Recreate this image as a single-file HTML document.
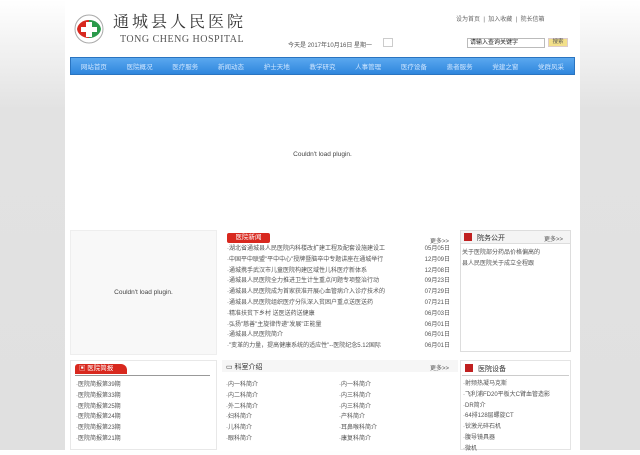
<!DOCTYPE html>
<html><head><meta charset="utf-8"><style>
*{margin:0;padding:0;box-sizing:border-box}
body{width:640px;height:450px;overflow:hidden;background:linear-gradient(#fff 0,#f4f4f4 40px,#e2e2e2 110px,#e0e0e0);font-family:"Liberation Sans","Noto Sans CJK SC",sans-serif;font-size:6px;color:#555;position:relative}
.a{position:absolute}
.wrap{left:65px;top:0;width:515px;height:450px;background:#fff}
.nav{left:70px;top:57px;width:505px;height:18px;background:linear-gradient(#5aa8ef,#2f86dd);border:1px solid #2a74c0;display:flex;justify-content:space-around;align-items:center;color:#cfe6ff;font-size:6.5px}
.list div{height:10.8px;line-height:10.8px;white-space:nowrap;overflow:hidden}
.red{background:#d8281e;color:#fff;font-size:6.5px;border-radius:2px}
</style></head><body>
<div class="a wrap"></div>
<svg class="a" style="left:73px;top:14px" width="32" height="32" viewBox="0 0 32 32"><circle cx="16" cy="15" r="14" fill="none" stroke="#aaa" stroke-width="1"/><path d="M4 15a12 10 0 0 1 12-9v18a12 10 0 0 1-12-9z" fill="#d8281e"/><path d="M28 15a12 10 0 0 0-12-9v18a12 10 0 0 0 12-9z" fill="#2a9a4a"/><path d="M13 8h6v5h5v5h-5v5h-6v-5h-5v-5h5z" fill="#fff"/></svg>
<div class="a" style="left:113px;top:11px;font-family:'Noto Serif CJK SC',serif;font-size:16px;line-height:20px;color:#333;letter-spacing:3px">通城县人民医院</div>
<div class="a" style="left:120px;top:34px;font-family:'Liberation Serif',serif;font-size:10px;line-height:11px;color:#555;letter-spacing:.5px">TONG CHENG HOSPITAL</div>
<div class="a" style="left:456px;top:14px;font-size:6px;color:#666">设为首页 &nbsp;|&nbsp; 加入收藏 &nbsp;|&nbsp; 院长信箱</div>
<div class="a" style="left:288px;top:40px;font-size:6px">今天是 2017年10月16日 星期一</div>
<div class="a" style="left:383px;top:38px;width:10px;height:9px;border:1px solid #ccc"></div>
<div class="a" style="left:467px;top:38px;width:78px;height:10px;border:1px solid #bbb;font-size:6px;color:#222;padding-left:2px;line-height:8px">请输入查询关键字</div>
<div class="a" style="left:548px;top:38px;width:20px;height:9px;background:#f3e08a;border:1px solid #dcc;font-size:5.5px;text-align:center;line-height:7px">搜索</div>
<div class="a nav"><span>网站首页</span><span>医院概况</span><span>医疗服务</span><span>新闻动态</span><span>护士天地</span><span>教学研究</span><span>人事管理</span><span>医疗设备</span><span>患者服务</span><span>党建之窗</span><span>党群风采</span></div>
<div class="a" style="left:70px;top:151px;width:505px;text-align:center;font-size:6.5px;color:#444">Couldn't load plugin.</div>
<div class="a" style="left:70px;top:230px;width:147px;height:125px;background:#f8f8f8;border:1px solid #eee;text-align:center;line-height:123px;font-size:6.5px;color:#444">Couldn't load plugin.</div>
<div class="a red" style="left:227px;top:233px;width:43px;height:10px;line-height:10px;text-align:center">医院新闻</div>
<div class="a" style="left:430px;top:236px">更多>></div>
<div class="a list" style="left:227px;top:244px;width:230px">
<div>·湖北省通城县人民医院内科楼改扩建工程及配套设施建设工</div><div>·中国平中联盟"平中中心"授牌暨脑卒中专题讲座在通城举行</div><div>·通城携手武汉市儿童医院构建区域性儿科医疗新体系</div><div>·通城县人民医院全力推进卫生计生重点问题专项整治行动</div><div>·通城县人民医院成为首家获准开展心血管病介入诊疗技术的</div><div>·通城县人民医院组织医疗分队深入贫困户重点送医送药</div><div>·精准扶贫下乡村 送医送药送健康</div><div>·弘扬"慈善"主旋律传递"发展"正能量</div><div>·通城县人民医院简介</div><div>·"变革的力量，提高健康系统的适应性"--医院纪念5.12国际</div></div>
<div class="a list" style="left:424px;top:244px;text-align:right;width:26px">
<div>05月05日</div><div>12月09日</div><div>12月08日</div><div>09月23日</div><div>07月29日</div><div>07月21日</div><div>06月03日</div><div>06月01日</div><div>06月01日</div><div>06月01日</div></div>
<div class="a" style="left:460px;top:230px;width:111px;height:122px;border:1px solid #ddd"></div>
<div class="a" style="left:461px;top:231px;width:109px;height:13px;background:#f4f4f4;border-bottom:1px solid #ddd"></div>
<div class="a" style="left:464px;top:233px;width:8px;height:8px;background:#c02020"></div>
<div class="a" style="left:477px;top:233px;font-size:7px;color:#333">院务公开</div>
<div class="a" style="left:544px;top:234px">更多>></div>
<div class="a list" style="left:462px;top:248px"><div>关于医院部分药品价格偏高的</div><div>县人民医院关于成立全程跟</div></div>
<div class="a" style="left:70px;top:360px;width:147px;height:90px;border:1px solid #e8e8e8"></div>
<div class="a red" style="left:75px;top:364px;width:52px;height:10px;line-height:10px;padding-left:4px;border-radius:3px 6px 0 0">▣ 医院简报</div>
<div class="a" style="left:75px;top:375px;width:135px;border-top:1px solid #999"></div>
<div class="a list" style="left:76px;top:380px"><div>·医院简报第39期</div><div>·医院简报第33期</div><div>·医院简报第25期</div><div>·医院简报第24期</div><div>·医院简报第23期</div><div>·医院简报第21期</div></div>
<div class="a" style="left:222px;top:360px;width:236px;height:12px;background:#f6f6f6"></div>
<div class="a" style="left:226px;top:362px;font-size:7px;color:#333">▭ 科室介绍</div>
<div class="a" style="left:430px;top:363px">更多>></div>
<div class="a list" style="left:226px;top:380px"><div>·内一科简介</div><div>·内二科简介</div><div>·外二科简介</div><div>·妇科简介</div><div>·儿科简介</div><div>·眼科简介</div></div>
<div class="a list" style="left:339px;top:380px"><div>·内一科简介</div><div>·内三科简介</div><div>·内三科简介</div><div>·产科简介</div><div>·耳鼻喉科简介</div><div>·康复科简介</div></div>
<div class="a" style="left:460px;top:360px;width:111px;height:90px;border:1px solid #e4e4e4"></div>
<div class="a" style="left:465px;top:364px;width:8px;height:8px;background:#c02020"></div>
<div class="a" style="left:478px;top:364px;font-size:7px;color:#333">医院设备</div>
<div class="a" style="left:462px;top:375px;width:107px;border-top:1px solid #ccc"></div>
<div class="a list" style="left:463px;top:379px"><div>·射频热凝马克斯</div><div>·飞利浦FD20平板大C臂血管造影</div><div>·DR简介</div><div>·64排128层螺旋CT</div><div>·钬激光碎石机</div><div>·腹导镜具器</div><div>·微机</div></div>
</body></html>
